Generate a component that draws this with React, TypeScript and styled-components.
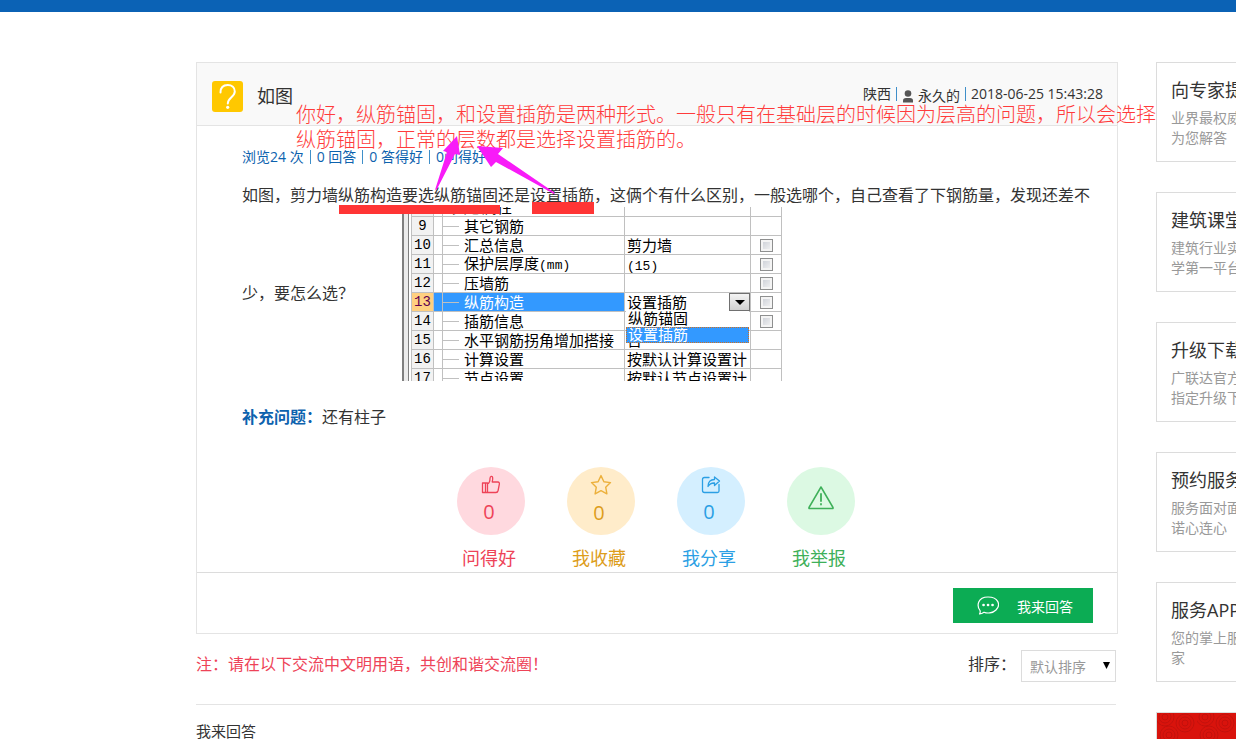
import React from "react";
import styled, { createGlobalStyle, css } from "styled-components";

const sans = `"Open Sans", "Noto Sans CJK SC", sans-serif`;

const Global = createGlobalStyle`
  *, *::before, *::after { box-sizing: border-box; }
  body { margin: 0; background: #fff; color: #333; font-family: ${sans}; font-size: 16px; overflow-x: hidden; }
  h1, h2, p, ul { margin: 0; padding: 0; font-weight: 400; }
  button, select, input { font: inherit; margin: 0; }
`;

const TopBar = styled.div`
  height: 12px;
  background: #0b62b5;
`;

const Page = styled.div`
  display: grid;
  grid-template-columns: minmax(0, 1fr) 80px;
  column-gap: 38px;
  padding: 50px 0 0 196px;
  overflow: hidden;
`;

const Card = styled.article`
  position: relative;
  border: 1px solid #e4e4e4;
`;

const CardHeader = styled.header`
  display: flex;
  align-items: center;
  height: 63px;
  padding: 4px 14px 0 15px;
  background: #f9f9f9;
  border-bottom: 1px solid #e4e4e4;
`;

const Title = styled.h1`
  flex: 1;
  margin-left: 14px;
  font-size: 18px;
  line-height: 24px;
`;

const Meta = styled.div`
  display: flex;
  align-items: center;
  gap: 5px;
  padding-bottom: 4px;
  font-size: 14px;
  line-height: 20px;
  white-space: nowrap;
`;

const Divider = styled.i`
  width: 1px;
  height: 14px;
  background: #3f8fc9;
`;

const Author = styled.span`
  display: flex;
  align-items: center;
  gap: 4px;
  padding-top: 4px;
`;

const Body = styled.div`
  padding: 20px 24px 0 45px;
`;

const Stats = styled.div`
  display: flex;
  align-items: center;
  gap: 6px;
  color: #0d62ae;
  font-size: 14px;
  line-height: 22px;
`;

const QuestionLine = styled.p`
  margin-top: 16px;
  font-size: 16px;
  line-height: 22px;
  white-space: nowrap;
`;

const QuestionRow = styled.div`
  display: flex;
  align-items: center;
  gap: 48px;
  margin-top: 1px;
  p { padding-bottom: 4px; }
`;

const Clip = styled.div`
  width: 380px;
  height: 174px;
  overflow: hidden;
  display: flex;
  border-left: 2px solid #808080;
`;

const Gutter = styled.div`
  flex: none;
  width: 8px;
  border-left: 4px solid #ececec;
  border-right: 1px solid #c0c0c0;
  box-shadow: inset 1px 0 0 #808080;
`;

const Grid = styled.table`
  flex: none;
  width: 370px;
  height: 190px;
  margin-top: -9px;
  table-layout: fixed;
  border-collapse: separate;
  border-spacing: 0;
  color: #000;
  font-size: 15px;
  line-height: 18px;
`;

const cell = css`
  height: 19px;
  padding: 0;
  border-right: 1px solid #c0c0c0;
  border-bottom: 1px solid #c0c0c0;
  white-space: nowrap;
  overflow: hidden;
  text-align: left;
  font-weight: 400;
`;

const NumCell = styled.th<{ $on?: boolean }>`
  ${cell}
  background: ${(p) => (p.$on ? "#ffd080" : "#f2f2f2")};
  color: ${(p) => (p.$on ? "#600050" : "#000")};
  font-family: "Liberation Mono", monospace;
  font-size: 14px;
  text-align: center;
`;

const Cell = styled.td<{ $on?: boolean }>`
  ${cell}
  background: ${(p) => (p.$on ? "#3399ff" : "#fff")};
  color: ${(p) => (p.$on ? "#fff" : "#000")};
`;

const Name = styled.div<{ $group?: boolean }>`
  display: flex;
  align-items: center;
  gap: 5px;
  height: 18px;
  padding-left: ${(p) => (p.$group ? "9px" : "0")};
  &::before {
    content: "";
    display: ${(p) => (p.$group ? "none" : "block")};
    width: 16px;
    height: 1px;
    background: #c0c0c0;
  }
`;

const Value = styled.div`
  height: 18px;
  padding-left: 2px;
  overflow: hidden;
`;

const Mono = styled.span`
  font-family: "Liberation Mono", monospace;
  font-size: 13px;
`;

const ComboCell = styled(Cell)`
  overflow: visible;
`;

const Combo = styled.div`
  position: relative;
  height: 18px;
`;

const ComboSelect = styled.select`
  display: block;
  width: 100%;
  height: 18px;
  padding: 0 0 0 2px;
  border: 0;
  border-radius: 0;
  appearance: none;
  background: #fff;
  color: #000;
  font-size: 15px;
  line-height: 18px;
`;

const ComboArrow = styled.span`
  position: absolute;
  top: 0;
  right: 0;
  display: grid;
  place-items: center;
  width: 21px;
  height: 18px;
  border: 1px solid #707070;
  background: linear-gradient(#f4f4f4, #d0d0d0);
  pointer-events: none;
`;

const Options = styled.ul`
  position: absolute;
  z-index: 2;
  top: 18px;
  left: 1px;
  right: 1px;
  list-style: none;
  background: #fff;
`;

const Option = styled.li<{ $on?: boolean }>`
  height: 16px;
  padding-left: 2px;
  font-size: 15px;
  line-height: 15px;
  color: ${(p) => (p.$on ? "#fff" : "#000")};
  background: ${(p) => (p.$on ? "#3399ff" : "#fff")};
  outline: ${(p) => (p.$on ? "1px dotted #d07020" : "none")};
  outline-offset: -1px;
`;

const Tick = styled.input`
  appearance: none;
  display: block;
  width: 13px;
  height: 13px;
  margin: 0 auto;
  border: 1px solid #8e8f8f;
  background: linear-gradient(135deg, #c8ccd4, #f6f6f6);
  box-shadow: inset 0 0 0 2px #f4f4f4;
`;

const Extra = styled.p`
  margin-top: 24px;
  line-height: 24px;
  b { color: #0d62ae; }
`;

const Actions = styled.div`
  display: flex;
  justify-content: center;
  gap: 42px;
  padding: 38px 24px 1px 0;
`;

const Action = styled.button<{ $ink: string }>`
  display: flex;
  flex-direction: column;
  align-items: center;
  gap: 10px;
  width: 68px;
  padding: 0;
  border: 0;
  background: none;
  color: ${(p) => p.$ink};
  font-size: 18px;
  line-height: 26px;
  white-space: nowrap;
`;

const ActionText = styled.span`
  padding-right: 3px;
`;

const Disc = styled.span<{ $fill: string }>`
  display: flex;
  flex-direction: column;
  align-items: center;
  justify-content: center;
  gap: 5px;
  width: 68px;
  height: 68px;
  padding-bottom: 4px;
  border-radius: 50%;
  background: ${(p) => p.$fill};
  font-size: 20px;
  line-height: 24px;
`;

const CardFooter = styled.footer`
  display: flex;
  justify-content: flex-end;
  padding: 15px 24px 10px;
  border-top: 1px solid #dcdcdc;
`;

const AnswerButton = styled.button`
  display: flex;
  align-items: center;
  gap: 18px;
  width: 140px;
  height: 35px;
  padding: 0 0 0 24px;
  border: 0;
  background: #0cac54;
  color: #fff;
  font-size: 14px;
`;

const Note = styled.div`
  display: flex;
  align-items: center;
  gap: 5px;
  margin-right: 2px;
  padding: 16px 0 22px;
  border-bottom: 1px solid #e4e4e4;
  p, label { padding-bottom: 6px; }
  p { flex: 1; color: #ee4358; }
`;

const SortBox = styled.div`
  position: relative;
  svg { position: absolute; right: 6px; top: 12px; pointer-events: none; }
`;

const SortSelect = styled.select`
  display: block;
  width: 95px;
  height: 32px;
  padding: 0 0 0 8px;
  border: 1px solid #dcdcdc;
  border-radius: 0;
  appearance: none;
  background: #fff;
  color: #999;
  font-size: 14px;
`;

const AnswerHeading = styled.h2`
  padding-top: 15px;
  font-size: 15px;
  line-height: 22px;
`;

const Side = styled.aside`
  display: flex;
  flex-direction: column;
  gap: 30px;
`;

const SideCard = styled.a`
  display: block;
  width: 240px;
  height: 100px;
  padding: 14px 0 0 14px;
  border: 1px solid #dcdcdc;
  color: #999;
  font-size: 14px;
  line-height: 20px;
  text-decoration: none;
  white-space: nowrap;
  strong {
    display: block;
    margin-bottom: 5px;
    color: #333;
    font-size: 18px;
    font-weight: 400;
    line-height: 26px;
  }
  span { display: block; }
`;

const Banner = styled.div`
  width: 240px;
  height: 27px;
  border: 1px solid #dcdcdc;
  border-bottom: 0;
  overflow: hidden;
  svg { display: block; }
`;

const Remark = styled.p`
  position: absolute;
  z-index: 3;
  top: 39px;
  left: 99px;
  color: #ff3b3b;
  font-size: 20px;
  font-weight: 300;
  line-height: 25px;
  white-space: nowrap;
`;

const Marks = styled.svg`
  position: absolute;
  z-index: 4;
  top: 67px;
  left: 141px;
  pointer-events: none;
`;

type RowData = { n: number; name: React.ReactNode; value?: React.ReactNode; tick?: boolean; group?: boolean };

const rows: RowData[] = [
  { n: 8, name: "其它属性", group: true },
  { n: 9, name: "其它钢筋" },
  { n: 10, name: "汇总信息", value: "剪力墙", tick: true },
  { n: 11, name: <span>保护层厚度<Mono>(mm)</Mono></span>, value: <Mono>(15)</Mono>, tick: true },
  { n: 12, name: "压墙筋", tick: true },
  { n: 13, name: "纵筋构造", tick: true },
  { n: 14, name: "插筋信息", tick: true },
  { n: 15, name: "水平钢筋拐角增加搭接", value: "否" },
  { n: 16, name: "计算设置", value: "按默认计算设置计" },
  { n: 17, name: "节点设置", value: "按默认节点设置计" },
];

const side = [
  ["向专家提问", "业界最权威", "为您解答"],
  ["建筑课堂", "建筑行业实", "学第一平台"],
  ["升级下载", "广联达官方", "指定升级下"],
  ["预约服务", "服务面对面", "诺心连心"],
  ["服务APP", "您的掌上服", "家"],
];

const stroke = { fill: "none", stroke: "currentColor", strokeLinecap: "round", strokeLinejoin: "round" } as const;

const actions = [
  {
    label: "问得好", ink: "#ee4358", fill: "#ffd9df", count: 0,
    icon: (
      <svg width="20" height="20" viewBox="0 0 20 20" {...stroke} strokeWidth="1.3">
        <path d="M1.500 8h5v9.500h-5zM4.500 8v9.500M6.500 9C8.500 8 9 6 9 3.500 9 1 11.200.8 11.600 2.500c.4 1.700 0 3.200-.4 4.500h5.600c1.500 0 1.800 1.200 1.500 2.400l-1.200 6.100c-.3 1.300-1 2-2.100 2H6.500" />
      </svg>
    ),
  },
  {
    label: "我收藏", ink: "#dd9d1b", fill: "#ffecca", count: 0,
    icon: (
      <svg width="22" height="22" viewBox="0 0 22 22" {...stroke} stroke="#ecb03c" strokeWidth="1.400">
        <path d="M11 1.600l2.900 6.100 6.600.9-4.800 4.600 1.200 6.700L11 16.700l-5.900 3.200 1.200-6.700L1.500 8.600l6.600-.9z" />
      </svg>
    ),
  },
  {
    label: "我分享", ink: "#2b9fe4", fill: "#d4efff", count: 0,
    icon: (
      <svg width="20" height="20" viewBox="0 0 20 20" {...stroke} strokeWidth="1.300">
        <path d="M8 2.500H3.500q-2 0-2 2v11q0 2 2 2h13q1.500 0 1.500-1.500V9.500M7 11.500C7 6.500 9.500 4.500 13.500 4.500V2L18.500 6l-5 4.500V8C10.500 7.800 8.500 9 7 11.500z" />
      </svg>
    ),
  },
  {
    label: "我举报", ink: "#3eb059", fill: "#dcf9e3",
    icon: (
      <svg width="28" height="26" viewBox="0 0 28 26" {...stroke} strokeWidth="1.500">
        <path d="M14 1L2 21.500q-.4 1 .6 1h22.800q1 0 .6-1z" />
        <path d="M14 8v7M14 18v.5" strokeWidth="1.800" />
      </svg>
    ),
  },
];

function GridRow({ row }: { row: RowData }) {
  const on = row.n === 13;
  return (
    <tr>
      <NumCell scope="row" $on={on}>{row.n}</NumCell>
      <Cell $on={on} />
      <Cell $on={on}><Name $group={row.group}>{row.name}</Name></Cell>
      {on ? (
        <ComboCell>
          <Combo>
            <ComboSelect aria-label="纵筋构造" defaultValue="设置插筋">
              <option>纵筋锚固</option>
              <option>设置插筋</option>
            </ComboSelect>
            <ComboArrow>
              <svg width="10" height="5"><path d="M0 0h10L5 5z" /></svg>
            </ComboArrow>
            <Options>
              <Option>纵筋锚固</Option>
              <Option $on>设置插筋</Option>
            </Options>
          </Combo>
        </ComboCell>
      ) : (
        <Cell><Value>{row.value}</Value></Cell>
      )}
      <Cell>{row.tick && <Tick type="checkbox" aria-label={`第${row.n}行`} />}</Cell>
    </tr>
  );
}

export default function App() {
  return (
    <>
      <Global />
      <TopBar />
      <Page>
        <main>
          <Card>
            <CardHeader>
              <svg width="31" height="31" viewBox="0 0 31 31">
                <rect width="31" height="31" rx="3" fill="#ffc800" />
                <path d="M8.500 11.500C8.500 6.500 11.500 4 15.700 4s7.100 2.600 7.100 6.500c0 5.500-7 6-7 12" fill="none" stroke="#fff" strokeWidth="2" strokeLinecap="round" />
                <circle cx="15.700" cy="26.300" r="1.600" fill="#fff" />
              </svg>
              <Title>如图</Title>
              <Meta>
                陕西
                <Divider />
                <Author>
                  <svg width="12" height="13" viewBox="0 0 12 13" fill="#555">
                    <circle cx="6" cy="3.500" r="3.300" />
                    <path d="M1 12.500V10.500Q1 8 4 8h4q3 0 3 2.500v2z" />
                  </svg>
                  永久的
                </Author>
                <Divider />
                <time>2018-06-25 15:43:28</time>
              </Meta>
            </CardHeader>
            <Body>
              <Stats>
                <span>浏览24 次</span>
                <Divider />
                <span>0 回答</span>
                <Divider />
                <span>0 答得好</span>
                <Divider />
                <span>0问得好</span>
              </Stats>
              <QuestionLine>如图，剪力墙纵筋构造要选纵筋锚固还是设置插筋，这俩个有什么区别，一般选哪个，自己查看了下钢筋量，发现还差不</QuestionLine>
              <QuestionRow>
                <p>少，要怎么选？</p>
                <Clip>
                  <Gutter />
                  <Grid>
                    <colgroup>
                      <col style={{ width: 22 }} />
                      <col style={{ width: 9 }} />
                      <col style={{ width: 182 }} />
                      <col style={{ width: 126 }} />
                      <col style={{ width: 31 }} />
                    </colgroup>
                    <tbody>
                      {rows.map((r) => <GridRow key={r.n} row={r} />)}
                    </tbody>
                  </Grid>
                </Clip>
              </QuestionRow>
              <Extra><b>补充问题：</b>还有柱子</Extra>
              <Actions>
                {actions.map((a) => (
                  <Action key={a.label} type="button" $ink={a.ink}>
                    <Disc $fill={a.fill}>
                      {a.icon}
                      {a.count !== undefined && <ActionText>{a.count}</ActionText>}
                    </Disc>
                    <ActionText>{a.label}</ActionText>
                  </Action>
                ))}
              </Actions>
            </Body>
            <CardFooter>
              <AnswerButton type="button">
                <svg width="22" height="20" viewBox="0 0 22 20" {...stroke} strokeWidth="1.200">
                  <path d="M3 14.500C-.5 10 .5 1 11 1s13 8 8 13c-3.500 3.500-9 3.500-12 2.200-1.500 1-3 1.600-4.500 1.800.7-1 1-2 .5-3.500z" />
                  <path d="M6.500 9h.1M11 9h.1M15.500 9h.1" strokeWidth="2.600" />
                </svg>
                我来回答
              </AnswerButton>
            </CardFooter>
            <Remark>
              你好，纵筋锚固，和设置插筋是两种形式。一般只有在基础层的时候因为层高的问题，所以会选择
              <br />
              纵筋锚固，正常的层数都是选择设置插筋的。
            </Remark>
            <Marks width="260" height="90" viewBox="338 130 260 90">
              <path d="M339 205h161v9H339zM532 202h62v12h-62z" fill="#ff3535" />
              <path d="M457 136l-14 15 4 1-12 38 2-1 18-35 5 1zM477 146l26 2-5 6 57 39-1 1-58-32-5 5z" fill="#f81bf8" />
            </Marks>
          </Card>
          <Note>
            <p>注：请在以下交流中文明用语，共创和谐交流圈！</p>
            <label htmlFor="sort">排序：</label>
            <SortBox>
              <SortSelect id="sort" defaultValue="默认排序">
                <option>默认排序</option>
              </SortSelect>
              <svg width="7" height="7"><path d="M0 0h7L3.500 7z" /></svg>
            </SortBox>
          </Note>
          <AnswerHeading>我来回答</AnswerHeading>
        </main>
        <Side>
          {side.map(([t, a, b]) => (
            <SideCard key={t} href="#">
              <strong>{t}</strong>
              <span>{a}</span>
              <span>{b}</span>
            </SideCard>
          ))}
          <Banner>
            <svg width="240" height="27">
              <defs>
                <pattern id="swirl" width="40" height="30" patternUnits="userSpaceOnUse">
                  <rect width="40" height="30" fill="#d9130c" />
                  <g fill="none" stroke="#c2100b">
                    <circle cx="8" cy="4" r="3" /><circle cx="8" cy="4" r="6" /><circle cx="8" cy="4" r="9" />
                    <circle cx="28" cy="10" r="3" /><circle cx="28" cy="10" r="6" /><circle cx="28" cy="10" r="9" />
                    <circle cx="12" cy="22" r="3" /><circle cx="12" cy="22" r="6" /><circle cx="12" cy="22" r="9" />
                  </g>
                </pattern>
              </defs>
              <rect width="240" height="27" fill="url(#swirl)" />
            </svg>
          </Banner>
        </Side>
      </Page>
    </>
  );
}
